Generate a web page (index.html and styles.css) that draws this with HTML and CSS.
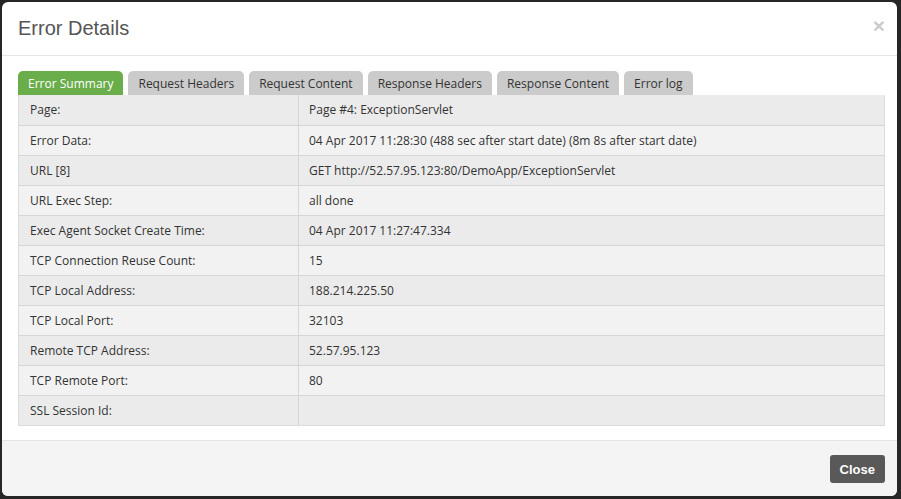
FILE: index.html
```html
<!DOCTYPE html>
<html>
<head>
    <title>Error Details</title>
    <link rel="stylesheet" href="styles.css">
</head>
<body>
    <div class="modal">
        <div class="modal-header">
            <button class="close-x" type="button">&times;</button>
            <h4 class="modal-title">Error Details</h4>
        </div>

        <div class="modal-body">
            <ul class="tabs">
                <li class="tab active">Error Summary</li>
                <li class="tab">Request Headers</li>
                <li class="tab">Request Content</li>
                <li class="tab">Response Headers</li>
                <li class="tab">Response Content</li>
                <li class="tab">Error log</li>
            </ul>

            <table class="details">
                <tr><td class="label">Page:</td><td>Page #4: ExceptionServlet</td></tr>
                <tr><td class="label">Error Data:</td><td>04 Apr 2017 11:28:30 (488 sec after start date) (8m 8s after start date)</td></tr>
                <tr><td class="label">URL [8]</td><td>GET http://52.57.95.123:80/DemoApp/ExceptionServlet</td></tr>
                <tr><td class="label">URL Exec Step:</td><td>all done</td></tr>
                <tr><td class="label">Exec Agent Socket Create Time:</td><td>04 Apr 2017 11:27:47.334</td></tr>
                <tr><td class="label">TCP Connection Reuse Count:</td><td>15</td></tr>
                <tr><td class="label">TCP Local Address:</td><td>188.214.225.50</td></tr>
                <tr><td class="label">TCP Local Port:</td><td>32103</td></tr>
                <tr><td class="label">Remote TCP Address:</td><td>52.57.95.123</td></tr>
                <tr><td class="label">TCP Remote Port:</td><td>80</td></tr>
                <tr><td class="label">SSL Session Id:</td><td></td></tr>
            </table>
        </div>

        <div class="modal-footer">
            <button class="btn-close" type="button">Close</button>
        </div>
    </div>
</body>
</html>
```

FILE: styles.css
```css
/* Error details dialog */
html, body {
    height: 100%;
}

body {
    margin: 0;
    padding: 2px 4px 3px 2px;
    box-sizing: border-box;
    background-color: #262626;
    font-family: 'Open Sans', sans-serif;
    font-size: 12px;
    color: #333;
}

.modal {
    background-color: #fff;
    border-radius: 6px;
    height: 100%;
    display: flex;
    flex-direction: column;
    overflow: hidden;
}

.modal-header {
    padding: 15px 12px 16px 16px;
    border-bottom: 1px solid #e5e5e5;
}

.modal-title {
    margin: 0;
    font-family: 'Liberation Sans', Arial, sans-serif;
    font-size: 20px;
    font-weight: normal;
    line-height: 22px;
    color: #555;
}

.close-x {
    float: right;
    margin-top: -2px;
    padding: 0;
    border: none;
    background: none;
    font-family: 'Liberation Sans', Arial, sans-serif;
    font-size: 21px;
    font-weight: bold;
    line-height: 1;
    color: #000;
    opacity: 0.2;
    cursor: pointer;
}

.modal-body {
    flex: 1;
    padding: 15px 12px 14px 16px;
}

.tabs {
    list-style: none;
    margin: 0;
    padding: 0;
    display: flex;
    gap: 5px;
}

.tab {
    background-color: #cbcbcb;
    border-radius: 5px 5px 0 0;
    padding: 2px 10px 0;
    line-height: 22px;
    height: 22px;
    color: #333;
    cursor: pointer;
}

.tab.active {
    background-color: #6aad4b;
    color: #fff;
}

.details {
    width: 100%;
    border-collapse: separate;
    border-spacing: 0;
    border: 1px solid #dcdcdc;
    border-top: none;
}

.details td {
    padding: 6px 10px;
    line-height: 17px;
    height: 17px;
    border-top: 1px solid #d6d6d6;
    border-left: 1px solid #d6d6d6;
}

.details tr:first-child td {
    border-top: none;
    padding-top: 6px;
    padding-bottom: 7px;
}

.details td.label {
    width: 258px;
    padding-left: 11px;
    border-left: none;
}

.details tr:nth-child(odd) td {
    background-color: #ebebeb;
}

.details tr:nth-child(even) td {
    background-color: #f2f2f2;
}

.modal-footer {
    border-top: 1px solid #e5e5e5;
    background-color: #f4f4f4;
    padding: 14px 12px 13px 16px;
    display: flex;
    justify-content: flex-end;
}

.btn-close {
    background-color: #595959;
    color: #fff;
    border: none;
    border-radius: 3px;
    height: 28px;
    padding: 0 10px;
    font-family: 'Liberation Sans', Arial, sans-serif;
    font-size: 13px;
    font-weight: bold;
    cursor: pointer;
}
```
